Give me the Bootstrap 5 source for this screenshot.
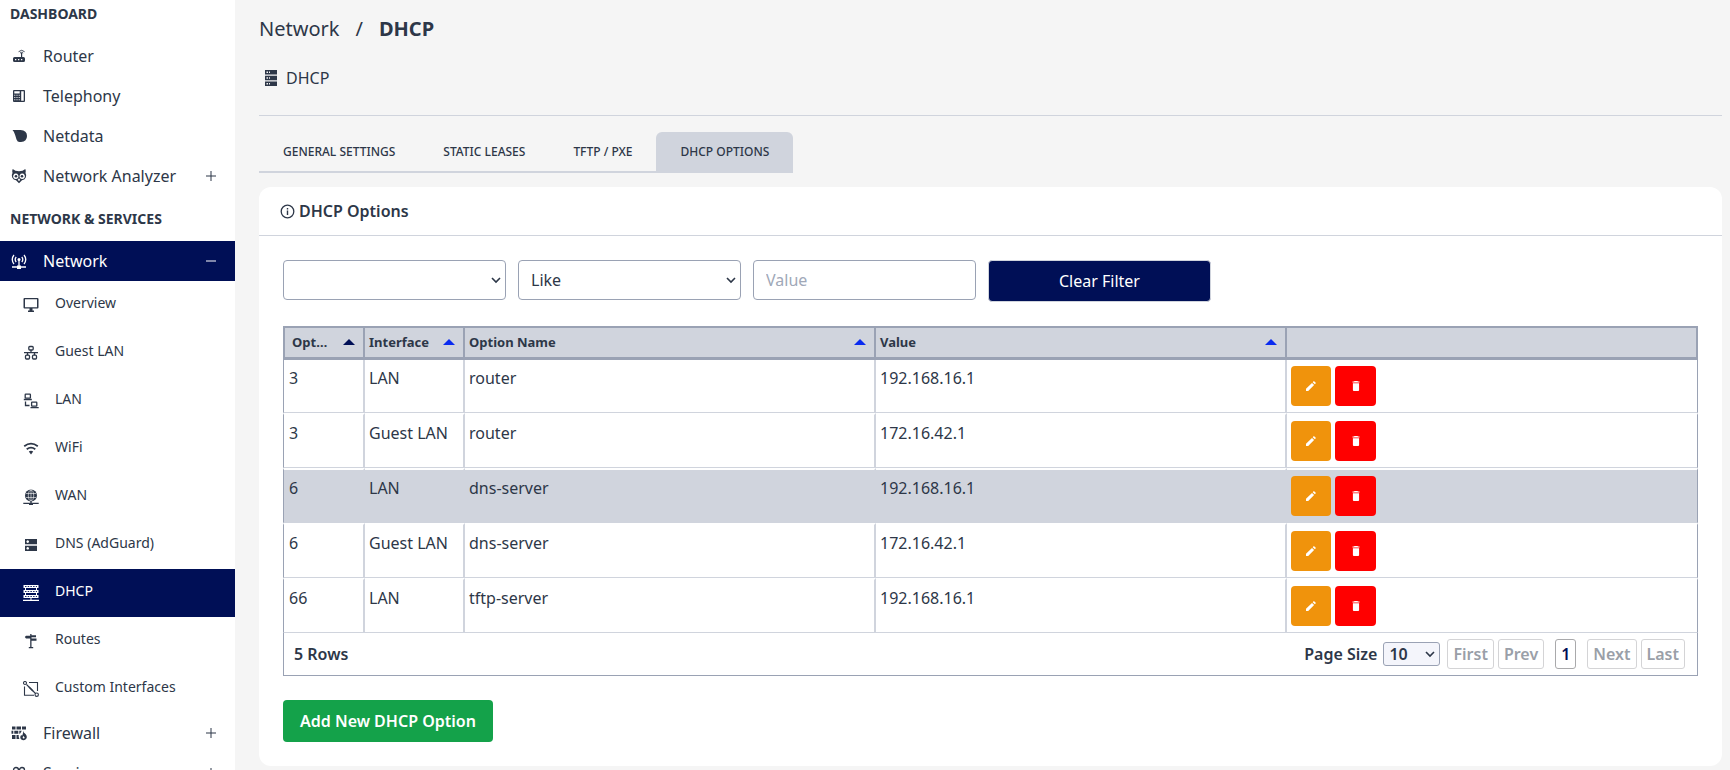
<!DOCTYPE html>
<html lang="en">
<head>
<meta charset="utf-8">
<meta name="viewport" content="width=device-width, initial-scale=1">
<title>DHCP - Network</title>
<link href="https://cdn.jsdelivr.net/npm/bootstrap@5.3.0/dist/css/bootstrap.min.css" rel="stylesheet">
<style>
:root { --ink:#2d3748; --navy:#000f56; --line:#d0d4dd; --edge:#9aa2b4; --page:#f5f5f5; }
body { font-family:"Noto Sans",sans-serif; font-size:16px; line-height:24px; color:var(--ink); background:var(--page); }
svg { display:block; fill:currentColor; }
.line-art { fill:none; stroke:currentColor; }

/* sidebar */
.side { width:235px; background:#fff; }
.side-title { font-size:14px; font-weight:700; line-height:20px; padding:4px 0 12px 10px; }
.side-title.later { padding:13px 0 12px 10px; }
.side-link { display:flex; align-items:center; height:40px; padding:0 18px 0 11px; color:var(--ink); text-decoration:none; }
.side-link svg { width:16px; height:16px; }
.side-link span { margin-left:16px; flex:1; }
.side-link .toggle-sign { width:12px; height:12px; }
.sub-link { display:flex; align-items:center; height:48px; padding-left:23px; color:var(--ink); font-size:14px; text-decoration:none; }
.sub-link svg { width:16px; height:16px; }
.sub-link span { margin-left:16px; padding-bottom:4px; }
.side .current { background:var(--navy); color:#fff; }

/* page header */
.crumbs { font-size:20px; line-height:28px; padding-top:15px; }
.crumbs a { color:inherit; text-decoration:none; }
.page-title { padding:23px 5px 25px; line-height:24px; border-bottom:1px solid var(--line); }
.tab-row { margin-top:16px; }
.tab-row .nav-link { color:var(--ink); font-size:12px; font-weight:500; line-height:16px; padding:12px 24px 11px; border-bottom:2px solid var(--line); border-radius:0; text-transform:uppercase; }
.tab-row .nav-link.active { background:var(--line); border-radius:6px 6px 0 0; }

/* panel */
.panel { background:#fff; border-radius:12px; margin-top:14px; }
.panel-head { height:49px; padding:0 21px; border-bottom:1px solid var(--line); font-weight:600; }
.panel-body { padding:24px; }
.filters { column-gap:12px; }
.field { width:223px; height:40px; border:1px solid var(--edge); border-radius:4px; background:#fff; color:var(--ink); }
.arrow { appearance:none; background-image:url("data:image/svg+xml,%3Csvg xmlns='http://www.w3.org/2000/svg' viewBox='0 0 10 7'%3E%3Cpath d='M1 1l4 4 4-4' fill='none' stroke='%232d3748' stroke-width='1.600'/%3E%3C/svg%3E"); background-repeat:no-repeat; background-size:10px 7px; background-position:right 4px center; }
select.field { padding:0 12px; }
input.field { padding:0 12px; }
input.field::placeholder { color:#a0a8b8; opacity:1; }
.btn { --bs-btn-font-size:16px; --bs-btn-border-radius:4px; --bs-btn-padding-y:0; }
.btn-clear { width:223px; height:42px; background:var(--navy); border-color:var(--line); color:#fff; }
.btn-add { height:42px; background:#14a24a; color:#fff; --bs-btn-font-weight:600; --bs-btn-padding-x:17px; border:0; }
.btn-act { width:40px; height:40px; display:flex; align-items:center; justify-content:center; padding:0; border:0; color:#fff; }
.btn-edit { background:#f0930c; }
.btn-del { width:41px; background:#f00; }

/* grid of options */
.grid-box { margin-top:24px; border:1px solid var(--edge); border-top:0; }
.opts { width:calc(100% + 2px); margin:0 -1px; table-layout:fixed; border-collapse:separate; border-spacing:0; }
.opts th { height:34px; padding:0 8px 1px 4px; font-size:13px; font-weight:700; line-height:20px; background:var(--line); border:solid var(--edge); border-width:2px 2px 3px 0; }
.opts th:first-child { border-left-width:2px; padding-left:7px; }
.opts td { height:55px; padding:6px 4px 4px; vertical-align:top; border:solid var(--line); border-width:2px 2px 1px 0; border-top-color:#fff; }
.opts tr:first-child td { height:53px; border-top-width:0; }
.opts td:first-child { border-left:1px solid var(--edge); padding-left:5px; }
.opts td:last-child { border-right:1px solid var(--edge); }
.opts .picked td { background:var(--line) padding-box; border-right-color:var(--line); }
.opts .picked td:last-child { border-right-color:var(--edge); }
.sort { width:12px; height:6px; flex:none; color:#0a2bf0; }
.sort.on { color:var(--navy); }

.foot { height:42px; padding:0 12px 0 10px; font-weight:600; }
.size-pick { width:57px; height:24px; margin:0 7px 0 6px; padding:0 0 0 5px; border:1px solid var(--edge); border-radius:3px; background-color:#f4f5fb; color:var(--ink); font-weight:600; line-height:20px; }
.pg { height:30px; padding:0 5px; border:1px solid #a9a9ab; border-radius:3px; background:#fff; color:var(--navy); font-weight:600; }
.pg:disabled { color:#9a9fa8; border-color:#d4d4d6; }
.pg-now { margin:0 7px; }
</style>
</head>
<body>
<div class="d-flex vh-100 overflow-hidden">

<nav class="side flex-shrink-0 overflow-hidden" aria-label="Main">
  <div class="side-title">DASHBOARD</div>
  <a class="side-link" href="#"><svg viewBox="0 0 16 16"><path d="M3.500 9H10V5h1.200v4h1.300q1.500 0 1.500 1.500v2q0 1.500-1.500 1.500h-9Q2 14 2 12.500v-2Q2 9 3.500 9z"/><path fill="#fff" d="M4 11h1.300v1.200H4zM7 11h1.300v1.200H7zM10 11h1.300v1.200H10z"/><path class="line-art" d="M7.600 3.700q3-2.800 6 0M9 5q1.600-1.300 3.200 0" stroke-width=".9"/></svg><span>Router</span></a>
  <a class="side-link" href="#"><svg viewBox="0 0 16 16"><path fill-rule="evenodd" d="M3 2h10q1 0 1 1v10q0 1-1 1H3q-1 0-1-1V3q0-1 1-1zm.300 1.200v2.300h5.400V3.200zM10.200 3.200v9.600h2.500V3.200zM3.300 6.800v1h1v-1zm2.200 0v1h1v-1zm2.200 0v1h1v-1zM3.300 9v1h1V9zm2.200 0v1h1V9zm2.200 0v1h1V9zM3.300 11.300v1h1v-1zm2.200 0v1h1v-1zm2.200 0v1h1v-1z"/></svg><span>Telephony</span></a>
  <a class="side-link" href="#"><svg viewBox="0 0 16 16"><path d="M1.500 2H9.500Q16 2.400 16 8T10 14H8.500Q6.500 14 5.500 11.500L4.300 7.500Q3.600 4 1.500 2z"/></svg><span>Netdata</span></a>
  <a class="side-link" href="#"><svg viewBox="0 0 16 16"><path fill-rule="evenodd" d="M1.700 1Q4 3.200 8 3.200T14.300 1q1 2.500.2 4 1.300 2 .3 4.500Q13.600 12 11 12.300L8 15.200 5 12.300Q2.400 12 1.200 9.500q-1-2.500.3-4.500-.8-1.500.2-4zM4.800 5.600a2.700 2.700 0 1 0 .01 0zm6.400 0a2.700 2.700 0 1 0 .01 0zM8 10.300l-1.200 1.500L8 13.300l1.200-1.500z"/><circle cx="5" cy="8.300" r="1.300"/><circle cx="11" cy="8.300" r="1.300"/></svg><span>Network Analyzer</span><svg class="toggle-sign" viewBox="0 0 12 12"><path d="M5.500 1h1v4.500H11v1H6.500V11h-1V6.500H1v-1h4.500z"/></svg></a>
  <div class="side-title later">NETWORK &amp; SERVICES</div>
  <a class="side-link current" href="#" aria-expanded="true"><svg viewBox="0 0 16 16"><g class="line-art" stroke-width="1.300"><path d="M3 2Q-.500 6.300 3 11M13 2q3.500 4.300 0 9M5.200 4q-2 2.500 0 5M10.800 4q2 2.500 0 5M8 7v6M1 14h14"/></g><circle cx="8" cy="6.500" r="1.500"/><path d="M6 12.500h4V16H6z"/></svg><span>Network</span><svg class="toggle-sign" viewBox="0 0 12 12"><path d="M1 5.500h10v1H1z"/></svg></a>

  <a class="sub-link" href="#"><svg viewBox="0 0 16 16"><path fill-rule="evenodd" d="M1.500 1h13q1 0 1 1v8.500q0 1-1 1H9.500v2h1.500V15H5v-1.500h1.500v-2h-5q-1 0-1-1V2q0-1 1-1zM2 2.300v7.900h12V2.300z"/></svg><span>Overview</span></a>
  <a class="sub-link" href="#"><svg viewBox="0 0 16 16"><g class="line-art" stroke-width="1.300"><rect x="5.800" y="1.500" width="4.400" height="3.500" rx="1"/><rect x="2.500" y="10.200" width="4" height="3.800" rx="1"/><rect x="9.500" y="10.200" width="4" height="3.800" rx="1"/><path d="M8 5v2.700M1 7.700h14M4.500 7.700v2.500M11.500 7.700v2.500"/></g></svg><span>Guest LAN</span></a>
  <a class="sub-link" href="#"><svg viewBox="0 0 16 16"><g class="line-art" stroke-width="1.300"><rect x="2.200" y="1.200" width="5.200" height="4" rx=".5"/><rect x="8.600" y="9.200" width="5.200" height="4" rx=".5"/><path d="M.800 6.500h8M7.500 14.700h8.200M2.500 8.500v4h4"/></g></svg><span>LAN</span></a>
  <a class="sub-link" href="#"><svg viewBox="0 0 16 16"><g class="line-art" stroke-width="1.800"><path d="M1.200 5.300q6.800-5.300 13.600 0M3.700 8.300q4.300-3.400 8.600 0"/></g><path d="M5.800 10.500q2.200-1.500 4.400 0L8 13.500z"/></svg><span>WiFi</span></a>
  <a class="sub-link" href="#"><svg viewBox="0 0 16 16"><circle cx="8" cy="6.500" r="6"/><g fill="none" stroke="#fff" stroke-width=".6"><ellipse cx="8" cy="6.500" rx="2.700" ry="5.500"/><path d="M3 4.500h10M3 8.500h10M8 1v11"/></g><path d="M7.300 12h1.400v1.700h7V15H10v1H6v-1H.300v-1.300h7z"/></svg><span>WAN</span></a>
  <a class="sub-link" href="#"><svg viewBox="0 0 16 16"><path fill-rule="evenodd" d="M2 2h12v5.300H2zM2 8.700h12V14H2zM4.700 3.300a1.300 1.300 0 1 0 .01 0zM4.700 10a1.300 1.300 0 1 0 .01 0z"/></svg><span>DNS (AdGuard)</span></a>
  <a class="sub-link current" href="#" aria-current="page"><svg viewBox="0 0 16 16"><path d="M.500 0h15v3H.500zM.500 5h15v3H.500zM.500 10h15v3H.500zM2 3h1v2H2zM13 3h1v2h-1zM2 8h1v2H2zM13 8h1v2h-1zM7.500 13h1v1.700H16V16H0v-1.300h7.500z"/><path stroke="#000f56" stroke-width=".9" stroke-dasharray="1.500 1.200" d="M2 1.500h12M2 6.500h12M2 11.500h12"/></svg><span>DHCP</span></a>
  <a class="sub-link" href="#"><svg viewBox="0 0 16 16"><path d="M7.200 1h1.300v1.200H13v2H8.500v1.300h5v2.200h-5V14h1.700v1.200H5.800V14h1.400V5.500H3L1.800 4 3 2.800h4.200z"/></svg><span>Routes</span></a>
  <a class="sub-link" href="#"><svg viewBox="0 0 16 16"><g class="line-art" stroke-width="1.100"><path d="M6 1.500h8.500V10M1.500 5.500v8.800H11M3.500 3.500L12.500 12.500"/><circle cx="2" cy="2" r="1.500"/><circle cx="13.700" cy="13.700" r="1.700"/></g><path d="M5.500 6.500l1-1 4 4-1 1z"/></svg><span>Custom Interfaces</span></a>

  <a class="side-link" href="#"><svg viewBox="0 0 16 16"><path d="M1 1.500h3.500v3H1zM5.500 1.500H10v3H5.500zM11 1.500h4v3h-4zM.500 5.700h1.800v3H.500zM3.300 5.700h4v3h-4zM8.300 5.700h2.500L9 8.700h-.700zM1 10h3.500v4H1zM5.500 10h2.200v2l.7 2H5.500z"/><path fill-rule="evenodd" d="M12 5.500q.300 2 2.500 3.500 2.500 3 .3 5.200-2.300 1.800-4.500.2-2-2-.2-4.500l1 .8Q12.400 8.500 12 5.500zm.500 5.500q-1.500 1.500-.2 2.500 1.500.2 1.300-1z"/></svg><span>Firewall</span><svg class="toggle-sign" viewBox="0 0 12 12"><path d="M5.500 1h1v4.500H11v1H6.500V11h-1V6.500H1v-1h4.500z"/></svg></a>
  <a class="side-link" href="#"><svg viewBox="0 0 16 16"><g class="line-art" stroke-width="1.300"><circle cx="5" cy="5" r="2.500"/><circle cx="11" cy="5" r="2.500"/><circle cx="5" cy="11" r="2.500"/><circle cx="11" cy="11" r="2.500"/></g></svg><span>Services</span><svg class="toggle-sign" viewBox="0 0 12 12"><path d="M5.500 1h1v4.500H11v1H6.500V11h-1V6.500H1v-1h4.500z"/></svg></a>
</nav>

<main class="flex-grow-1 ps-4 pe-2">
  <div class="crumbs d-flex"><a href="#">Network</a><span class="px-3">/</span><b>DHCP</b></div>
  <div class="page-title d-flex align-items-center gap-2"><svg width="14" height="18" viewBox="0 0 14 18"><path fill-rule="evenodd" d="M1 1h12v4.500H1zM1 6.800h12v4.500H1zM1 12.500h12V17H1zM2.500 2.500V4H4V2.500zm2.500 0V4h1V2.500zM2.500 8.300v1.500H4V8.300zm2.500 0v1.500h1V8.300zM2.500 14v1.500H4V14zM5 14v1.500h1V14z"/></svg>DHCP</div>

  <div class="d-flex">
    <ul class="nav tab-row">
      <li class="nav-item"><a class="nav-link" href="#">General Settings</a></li>
      <li class="nav-item"><a class="nav-link" href="#">Static Leases</a></li>
      <li class="nav-item"><a class="nav-link" href="#">TFTP / PXE</a></li>
      <li class="nav-item"><a class="nav-link active" href="#" aria-current="true">DHCP Options</a></li>
    </ul>
  </div>

  <section class="panel">
    <div class="panel-head d-flex align-items-center gap-1"><svg width="15" height="15" viewBox="0 0 15 15"><circle class="line-art" cx="7.500" cy="7.500" r="6.300" stroke-width="1.300"/><path d="M6.800 4h1.400v1.400H6.800zM6.800 6.500h1.400V11H6.800z"/></svg>DHCP Options</div>
    <div class="panel-body">
      <div class="d-flex filters">
        <select class="field arrow" aria-label="Filter field"><option></option></select>
        <select class="field arrow" aria-label="Filter type"><option>Like</option></select>
        <input class="field" type="text" placeholder="Value" aria-label="Filter value">
        <button class="btn btn-clear" type="button">Clear Filter</button>
      </div>

      <div class="grid-box">
        <table class="opts">
          <colgroup><col style="width:82px"><col style="width:100px"><col><col><col></colgroup>
          <thead><tr>
            <th scope="col"><div class="d-flex align-items-center justify-content-between"><span>Opt…</span><svg class="sort on" viewBox="0 0 12 6"><path d="M6 0l6 6H0z"/></svg></div></th>
            <th scope="col"><div class="d-flex align-items-center justify-content-between"><span>Interface</span><svg class="sort" viewBox="0 0 12 6"><path d="M6 0l6 6H0z"/></svg></div></th>
            <th scope="col"><div class="d-flex align-items-center justify-content-between"><span>Option Name</span><svg class="sort" viewBox="0 0 12 6"><path d="M6 0l6 6H0z"/></svg></div></th>
            <th scope="col"><div class="d-flex align-items-center justify-content-between"><span>Value</span><svg class="sort" viewBox="0 0 12 6"><path d="M6 0l6 6H0z"/></svg></div></th>
            <th aria-label="Actions"></th>
          </tr></thead>
          <tbody id="rows"></tbody>
        </table>
        <div class="foot d-flex align-items-center">
          <span class="me-auto">5 Rows</span>
          <label for="size">Page Size</label>
          <select class="size-pick arrow" id="size"><option>10</option></select>
          <div class="d-flex gap-1">
            <button class="pg" type="button" disabled>First</button>
            <button class="pg" type="button" disabled>Prev</button>
            <button class="pg pg-now" type="button">1</button>
            <button class="pg" type="button" disabled>Next</button>
            <button class="pg" type="button" disabled>Last</button>
          </div>
        </div>
      </div>
      <button class="btn btn-add mt-4" type="button">Add New DHCP Option</button>
    </div>
  </section>
</main>
</div>

<script src="https://cdn.jsdelivr.net/npm/bootstrap@5.3.0/dist/js/bootstrap.bundle.min.js"></script>
<script>
const options = [
  ["3", "LAN", "router", "192.168.16.1"],
  ["3", "Guest LAN", "router", "172.16.42.1"],
  ["6", "LAN", "dns-server", "192.168.16.1"],
  ["6", "Guest LAN", "dns-server", "172.16.42.1"],
  ["66", "LAN", "tftp-server", "192.168.16.1"]
];
const actions = `<td><div class="d-flex gap-1">
  <button class="btn btn-act btn-edit" type="button" aria-label="Edit"><svg width="10" height="10" viewBox="0 0 10 10"><path d="M0 7.800L6 1.900 8.100 4 2.200 10H0zM6.700 1.200L7.900 0 10 2.100 8.800 3.300z"/></svg></button>
  <button class="btn btn-act btn-del" type="button" aria-label="Delete"><svg width="8" height="10" viewBox="0 0 8 10"><path d="M2.500 0h3l.5.500h1.500v1.100h-7V.500H2zM.900 2.200h6.200V9q0 1-1 1H1.900q-1 0-1-1z"/></svg></button>
</div></td>`;
document.getElementById("rows").innerHTML = options.map((o, i) =>
  `<tr class="${i === 2 ? "picked" : ""}">` + o.map(v => `<td>${v}</td>`).join("") + actions + "</tr>").join("");
</script>
</body>
</html>
